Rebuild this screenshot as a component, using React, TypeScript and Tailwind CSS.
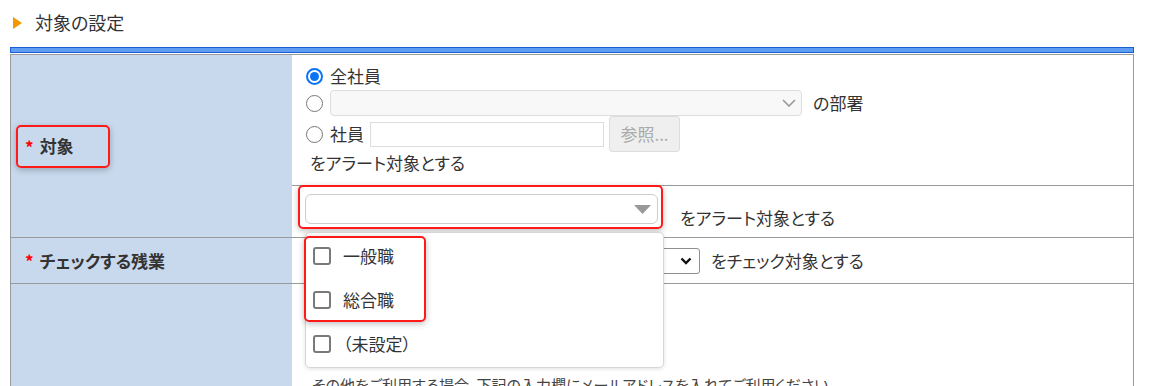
import React from 'react'

const font = "font-['Noto_Sans_CJK_JP','Noto_Sans',sans-serif] [font-feature-settings:'palt']"

function Radio({ checked = false }: { checked?: boolean }) {
  return checked ? (
    <span className="flex h-[17px] w-[17px] shrink-0 items-center justify-center rounded-full border-2 border-[#0b74f5] bg-white">
      <span className="h-[9px] w-[9px] rounded-full bg-[#0b74f5]" />
    </span>
  ) : (
    <span className="h-[17px] w-[17px] shrink-0 rounded-full border-[1.5px] border-[#777] bg-white" />
  )
}

function Checkbox() {
  return <span className="h-[18px] w-[18px] shrink-0 rounded-[3px] border-2 border-[#7a7a7a] bg-white" />
}

function Required({ children }: { children: React.ReactNode }) {
  return (
    <div className="flex items-center gap-[6px]">
      <span className="text-[17px] font-bold leading-none text-[#ff0000]">*</span>
      <span className="text-[17px] font-semibold text-[#333]">{children}</span>
    </div>
  )
}

const options = ['一般職', '総合職', '（未設定）']

export default function App() {
  return (
    <div className={`h-[386px] w-[1155px] overflow-hidden bg-white text-[#333] ${font}`}>
      {/* section header */}
      <div className="flex h-[47px] items-center pb-[2px] pl-[13px]">
        <span className="h-0 w-0 border-y-[6.5px] border-l-[9px] border-y-transparent border-l-[#f39800]" />
        <span className="ml-[13px] text-[18px] text-[#333]">対象の設定</span>
      </div>
      <div className="mx-[10px] mr-[21px] h-[6px] border border-[#1a5ed6] bg-[#5f9df2]" />

      <div className="relative mx-[10px] mr-[21px] mt-[1px] border border-[#9a9a9a]">
        {/* row: 対象 */}
        <div className="flex">
          <div className="flex w-[281px] shrink-0 items-center bg-[#c8d9ee] pl-[5px]">
            <div className="flex h-[43px] w-[94px] items-center rounded-[5px] border-2 border-[#ff1a1a] pl-[7px] shadow-[0_2px_6px_rgba(0,0,0,0.25)]">
              <Required>対象</Required>
            </div>
          </div>
          <div className="flex-1">
            <div className="h-[131px] border-b border-[#9a9a9a] pl-[14px] pt-[10px] text-[17px]">
              <div className="flex h-[22px] items-center gap-[7px]">
                <Radio checked />
                <span>全社員</span>
              </div>
              <div className="mt-[3px] flex h-[26px] items-center gap-[7px]">
                <Radio />
                <div className="flex h-[26px] w-[472px] items-center justify-end rounded-[4px] border border-[#ddd] bg-[#f8f8f8] pr-[5px]">
                  <svg width="14" height="8" viewBox="0 0 14 8">
                    <polyline points="1,1 7,7 13,1" fill="none" stroke="#999" strokeWidth="1.6" />
                  </svg>
                </div>
                <span className="ml-[4px]">の部署</span>
              </div>
              <div className="flex h-[36px] items-center">
                <Radio />
                <span className="ml-[7px]">社員</span>
                <div className="ml-[6px] h-[25px] w-[234px] border border-[#ddd] bg-white" />
                <div className="ml-[5px] flex h-[36px] w-[71px] items-center justify-center rounded-[3px] border border-[#ddd] bg-[#efefef] text-[#aaa]">
                  参照...
                </div>
              </div>
              <div className="flex h-[22px] items-center pl-[4px]">をアラート対象とする</div>
            </div>
            <div className="flex h-[51px] items-start pl-[6px] text-[17px]">
              <div className="-mt-[1px] rounded-[5px] border-2 border-[#ff1a1a] pb-[3px] pl-[5px] pr-[3px] pt-[7px] shadow-[0_2px_6px_rgba(0,0,0,0.25)]">
                <div className="flex h-[30px] w-[353px] items-center justify-end rounded-[6px] border border-[#ccc] bg-white pr-[6px]">
                  <svg width="17" height="9" viewBox="0 0 17 9">
                    <polygon points="0,0 17,0 8.5,9" fill="#999" />
                  </svg>
                </div>
              </div>
              <span className="ml-[17px] mt-[19px]">をアラート対象とする</span>
            </div>
          </div>
        </div>

        {/* row: チェックする残業 */}
        <div className="flex h-[46px] border-t border-[#9a9a9a]">
          <div className="flex w-[281px] shrink-0 items-center bg-[#c8d9ee] pl-[14px]">
            <Required>チェックする残業</Required>
          </div>
          <div className="flex flex-1 items-center pl-[13px] text-[17px]">
            <div className="flex h-[26px] w-[395px] items-center justify-end rounded-[3px] border border-[#8f8f8f] bg-white pr-[7px]">
              <svg width="12" height="8" viewBox="0 0 12 8">
                <polyline points="1.5,1.5 6,6 10.5,1.5" fill="none" stroke="#111" strokeWidth="2.4" />
              </svg>
            </div>
            <span className="ml-[11px]">をチェック対象とする</span>
          </div>
        </div>

        {/* row: other */}
        <div className="flex h-[120px] border-t border-[#9a9a9a]">
          <div className="w-[281px] shrink-0 bg-[#c8d9ee]" />
          <div className="flex-1 pl-[20px] pt-[91px] text-[15px] leading-[20px] text-[#444]">
            その他をご利用する場合、下記の入力欄にメールアドレスを入れてご利用ください
          </div>
        </div>

        {/* open dropdown */}
        <div className="absolute left-[294px] top-[177px] w-[359px] rounded-[5px] border border-[#d6d6d6] bg-white py-[1px] pl-[7px] text-[17px] shadow-[0_1px_4px_rgba(0,0,0,0.12)]">
          {options.map(o => (
            <div key={o} className="flex h-[44px] items-center gap-[12px]">
              <Checkbox />
              <span>{o}</span>
            </div>
          ))}
          <div className="pointer-events-none absolute -left-[2px] top-[3px] h-[86px] w-[122px] rounded-[5px] border-2 border-[#ff1a1a] shadow-[0_2px_6px_rgba(0,0,0,0.25)]" />
        </div>
      </div>
    </div>
  )
}
